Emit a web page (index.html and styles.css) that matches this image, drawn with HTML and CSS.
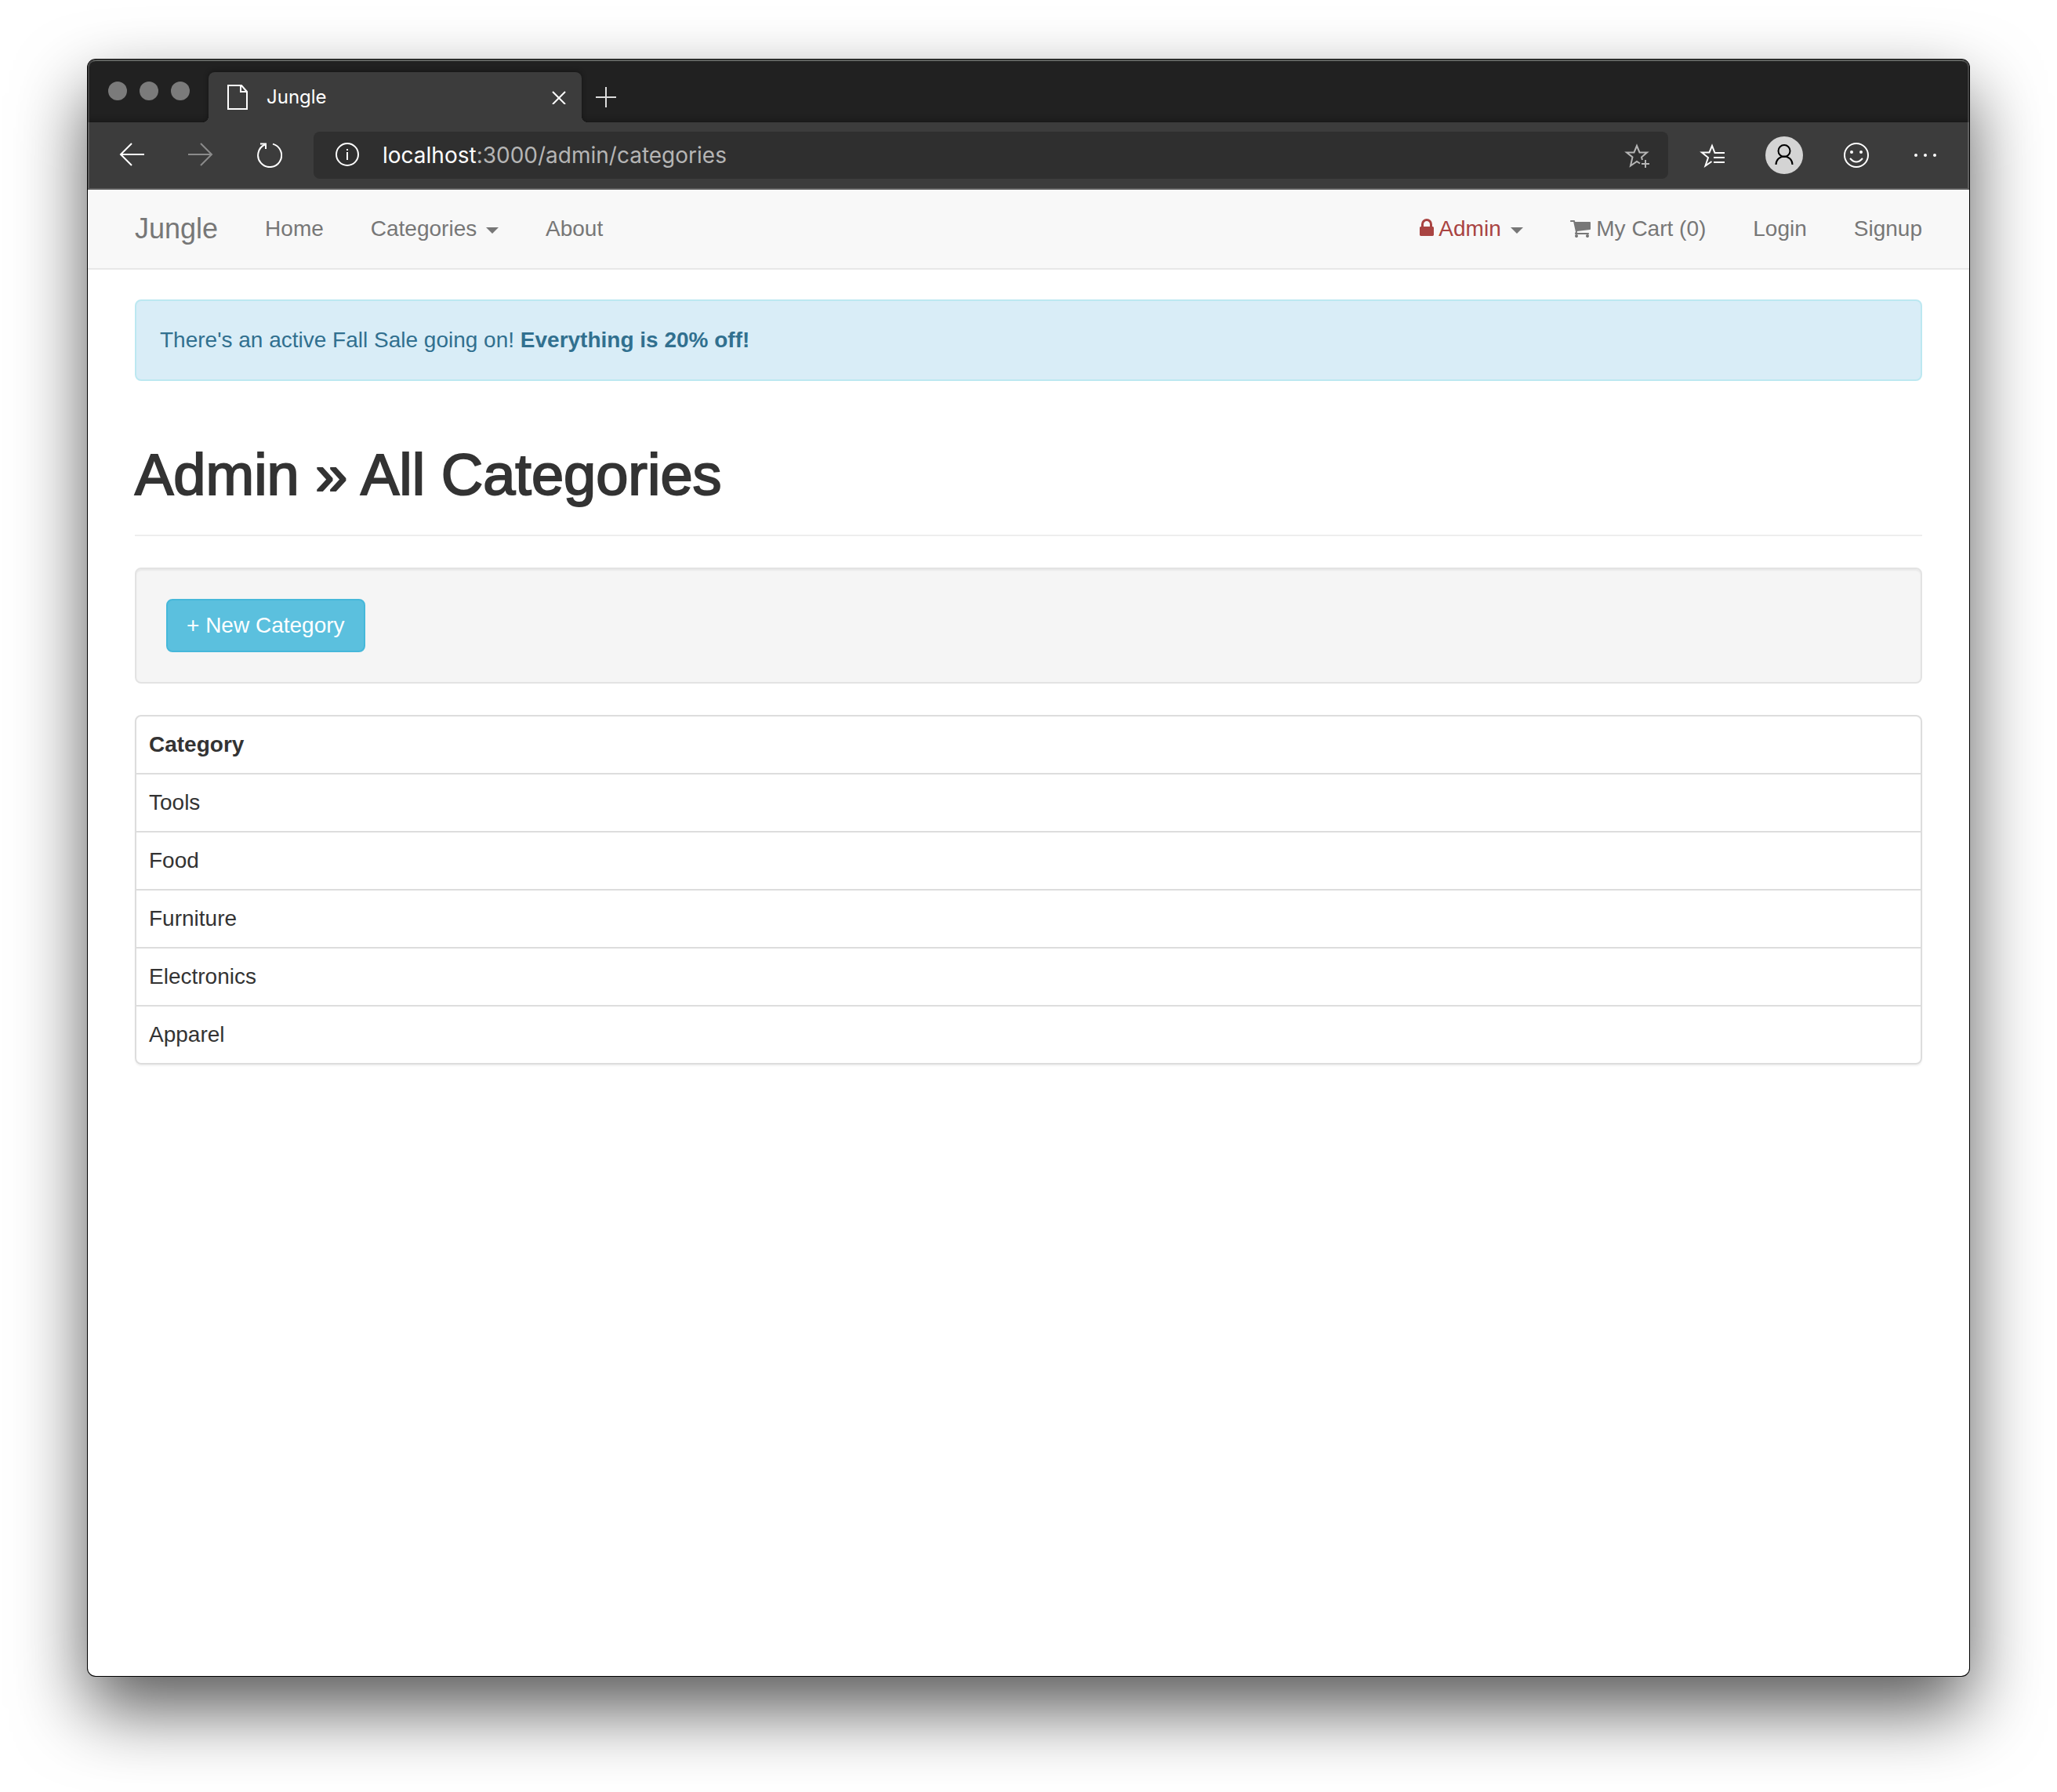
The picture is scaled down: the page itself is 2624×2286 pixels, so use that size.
FILE: index.html
```html
<!DOCTYPE html>
<html lang="en">
<head>
<meta charset="utf-8">
<title>Jungle</title>
<link rel="stylesheet" href="styles.css">
</head>
<body>
<div class="window">
  <header class="chrome">
    <div class="tab-strip">
      <div class="lights"><span class="light"></span><span class="light"></span><span class="light"></span></div>
      <div class="tab">
        <svg class="tab-icon" width="26" height="32" viewBox="0 0 26 32" fill="none" stroke="#fff" stroke-width="2"><path d="M1 1H18L25 9V31H1Z"/><path d="M17 1V9H25"/></svg>
        <span class="tab-title">Jungle</span>
        <button class="icon-button" type="button" aria-label="Close tab">
          <svg width="18" height="18" viewBox="0 0 18 18" fill="none" stroke="#fff" stroke-width="2"><path d="M1 2L17 18M17 2L1 18"/></svg>
        </button>
      </div>
      <button class="icon-button new-tab" type="button" aria-label="New tab">
        <svg width="26" height="26" viewBox="0 0 26 26" fill="none" stroke="#dcdcdc" stroke-width="2"><path d="M13 0V26M0 13H26"/></svg>
      </button>
    </div>
    <div class="toolbar">
      <div class="history">
        <button class="icon-button" type="button" aria-label="Back">
          <svg width="32" height="32" viewBox="0 0 32 32" fill="none" stroke="#fff" stroke-width="2"><path d="M32 15H2M16 1L2 15L16 29"/></svg>
        </button>
        <button class="icon-button" type="button" aria-label="Forward" disabled>
          <svg width="32" height="32" viewBox="0 0 32 32" fill="none" stroke="#8b8b8b" stroke-width="2"><path d="M0 15H30M16 1L30 15L16 29"/></svg>
        </button>
        <button class="icon-button" type="button" aria-label="Reload">
          <svg width="32" height="32" viewBox="0 0 32 32" fill="none" stroke="#fff" stroke-width="2"><path d="M20 1.6A15 15 0 1 1 10.5 2.2"/><path d="M4 1.6H11V8"/></svg>
        </button>
      </div>
      <div class="address">
        <svg width="32" height="32" viewBox="0 0 32 32" fill="none" stroke="#fff" stroke-width="2"><circle cx="15" cy="15" r="14"/><path d="M15 12V22M15 8V10"/></svg>
        <div class="url" role="textbox" aria-label="Address" contenteditable="true" spellcheck="false"><span class="host">localhost</span>:3000/admin/categories</div>
        <button class="icon-button" type="button" aria-label="Add to favorites">
          <svg width="32" height="32" viewBox="0 0 32 32" fill="none" stroke="#b5b5b5" stroke-width="2"><path d="M20 26.500L16 24L8 29.500L10.500 18.500L3 12.500H12.500L16 4L19.500 12.500H29L22 18.500L23 22"/><path d="M27 22V32M22 27H32"/></svg>
        </button>
      </div>
      <div class="actions">
        <button class="icon-button" type="button" aria-label="Favorites">
          <svg width="32" height="32" viewBox="0 0 32 32" fill="none" stroke="#fff" stroke-width="2"><path d="M32 13H19.500L16 4L12.500 12.500H3L11 19L7.500 29.500L15.500 24"/><path d="M18 19H32M18 25H32"/></svg>
        </button>
        <button class="icon-button" type="button" aria-label="Profile">
          <svg width="48" height="48" viewBox="0 0 48 48" fill="none" stroke="#000" stroke-width="2"><circle cx="24" cy="24" r="24" fill="#d4d4d4" stroke="none"/><circle cx="24" cy="18.500" r="7.500"/><path d="M13.500 36A10.500 10.500 0 0 1 34.500 36"/></svg>
        </button>
        <button class="icon-button" type="button" aria-label="Feedback">
          <svg width="32" height="32" viewBox="0 0 32 32" fill="none" stroke="#fff" stroke-width="2"><circle cx="16" cy="16" r="15"/><path d="M8 20Q16 29 24 20"/><g fill="#fff" stroke="none"><circle cx="10" cy="12" r="2"/><circle cx="22" cy="12" r="2"/></g></svg>
        </button>
        <button class="icon-button" type="button" aria-label="More">
          <svg width="40" height="32" viewBox="0 0 40 32" fill="#fff"><circle cx="8" cy="16" r="2"/><circle cx="20" cy="16" r="2"/><circle cx="32" cy="16" r="2"/></svg>
        </button>
      </div>
    </div>
  </header>

  <nav class="navbar">
    <div class="nav-group">
      <a class="brand" href="#">Jungle</a>
      <a class="nav-link" href="#">Home</a>
      <a class="nav-link" href="#">Categories <span class="caret"></span></a>
      <a class="nav-link" href="#">About</a>
    </div>
    <div class="nav-group">
      <a class="nav-link" href="#"><span class="admin"><svg width="18" height="22" viewBox="320 128 1152 1408" fill="currentColor"><path d="M640 768h512v-192q0-106-75-181t-181-75-181 75-75 181v192zm832 96v576q0 40-28 68t-68 28h-960q-40 0-68-28t-28-68v-576q0-40 28-68t68-28h32v-192q0-184 132-316t316-132 316 132 132 316v192h32q40 0 68 28t28 68z"/></svg> Admin</span> <span class="caret"></span></a>
      <a class="nav-link" href="#"><svg class="cart" width="26" height="22" viewBox="64 256 1664 1408" fill="currentColor"><path d="M704 1536q0 52-38 90t-90 38-90-38-38-90 38-90 90-38 90 38 38 90zm896 0q0 52-38 90t-90 38-90-38-38-90 38-90 90-38 90 38 38 90zm128-1088v512q0 24-16.500 42.500t-40.500 21.500l-1044 122q13 60 13 70 0 16-24 64h920q26 0 45 19t19 45-19 45-45 19h-1024q-26 0-45-19t-19-45q0-11 8-31.500t16-36 21.500-40 15.500-29.500l-177-823h-204q-26 0-45-19t-19-45 19-45 45-19h256q16 0 28.500 6.500t19.500 15.500 13 24.500 8 26 5.500 29.500 4.500 26h1201q26 0 45 19t19 45z"/></svg> My Cart (0)</a>
      <a class="nav-link" href="#">Login</a>
      <a class="nav-link" href="#">Signup</a>
    </div>
  </nav>

  <main class="content">
    <div class="alert" role="status">There's an active Fall Sale going on! <strong>Everything is 20% off!</strong></div>
    <div class="page-header"><h1>Admin » All Categories</h1></div>
    <div class="well"><a class="button" href="#">+ New Category</a></div>
    <div class="panel">
      <table class="table">
        <thead><tr><th scope="col">Category</th></tr></thead>
        <tbody>
          <tr><td>Tools</td></tr>
          <tr><td>Food</td></tr>
          <tr><td>Furniture</td></tr>
          <tr><td>Electronics</td></tr>
          <tr><td>Apparel</td></tr>
        </tbody>
      </table>
    </div>
  </main>
</div>
</body>
</html>
```
FILE: styles.css
```css
* { box-sizing: border-box; }

body {
  margin: 0;
  min-height: 100vh;
  padding: 76px 112px 148px;
  display: flex;
  flex-direction: column;
  background: #fff;
  color: #333;
  font: 28px/40px "Liberation Sans", Arial, sans-serif;
}

a { color: inherit; text-decoration: none; }
svg { flex: none; }

.window {
  flex: 1;
  border-radius: 10px;
  background: #fff;
  box-shadow: 0 0 0 1px #000, 0 42px 92px rgba(0, 0, 0, .66);
}

/* Browser chrome */
.chrome {
  border-radius: 10px 10px 0 0;
  background: #3c3c3c;
  box-shadow: inset 0 0 0 2px #5f5f5f;
}

.tab-strip {
  display: flex;
  align-items: flex-end;
  height: 80px;
  padding: 0 26px;
  border-radius: 10px 10px 0 0;
  background: #212121;
  box-shadow: inset 2px 0 #424242, inset -2px 0 #424242, inset 0 2px #5f625f, inset 0 -6px 6px -4px #171717;
}

.lights {
  display: flex;
  gap: 16px;
  align-self: center;
  margin-right: 24px;
}

.light {
  width: 24px;
  height: 24px;
  border-radius: 50%;
  background: #7b7b7b;
}

.tab {
  position: relative;
  flex: 0 1 476px;
  display: flex;
  align-items: center;
  gap: 24px;
  height: 64px;
  padding: 0 20px 0 24px;
  border-radius: 8px 8px 0 0;
  background: #3c3c3c;
  box-shadow: 0 -1px 6px rgba(0, 0, 0, .4);
  clip-path: inset(-8px -8px 0 -8px);
}

.tab::before,
.tab::after {
  content: "";
  position: absolute;
  bottom: 0;
  width: 8px;
  height: 8px;
}

.tab::before { right: 100%; background: radial-gradient(circle at 0 0, transparent 8px, #3c3c3c 8px); }
.tab::after { left: 100%; background: radial-gradient(circle at 100% 0, transparent 8px, #3c3c3c 8px); }

.tab-title {
  flex: 1;
  color: #fff;
  font: 24px/32px Inter, sans-serif;
}

.icon-button {
  display: flex;
  padding: 0;
  border: 0;
  background: none;
}

.new-tab {
  align-items: center;
  height: 64px;
  margin-left: 18px;
}

.toolbar {
  display: flex;
  align-items: center;
  gap: 40px;
  padding: 12px 36px 12px 40px;
  border-bottom: 2px solid #5c5c5c;
}

.history { display: flex; gap: 56px; }

.address {
  flex: 1;
  display: flex;
  align-items: center;
  gap: 28px;
  height: 60px;
  padding: 0 24px 0 28px;
  border-radius: 8px;
  background: #2f2f2f;
}

.url {
  flex: 1;
  color: #b5b5b5;
  font: 28px/40px Inter, sans-serif;
}

.host { color: #fff; }

.actions { display: flex; align-items: center; gap: 52px; }

/* Site navigation */
.navbar {
  display: flex;
  justify-content: space-between;
  padding: 30px 60px;
  border-bottom: 2px solid #e7e7e7;
  background: #f8f8f8;
  color: #777;
}

.nav-group { display: flex; gap: 60px; }
.brand { font-size: 36px; }
.admin { color: #a94442; }
.cart { vertical-align: -2px; }

.caret {
  display: inline-block;
  margin-left: 4px;
  border-top: 8px solid;
  border-right: 8px solid transparent;
  border-left: 8px solid transparent;
  vertical-align: middle;
}

/* Page content */
.content { padding: 38px 60px; }

.alert {
  padding: 30px;
  border: 2px solid #bce8f1;
  border-radius: 8px;
  background: #d9edf7;
  color: #31708f;
}

.page-header {
  margin: 80px 0 40px;
  padding-bottom: 36px;
  border-bottom: 2px solid #eee;
}

h1 {
  margin: 0;
  font-size: 74px;
  font-weight: 400;
  line-height: 80px;
  -webkit-text-stroke: 2px;
}

.well {
  display: flex;
  margin-bottom: 40px;
  padding: 38px;
  border: 2px solid #e3e3e3;
  border-radius: 8px;
  background: #f5f5f5;
  box-shadow: inset 0 2px 2px rgba(0, 0, 0, .05);
}

.button {
  padding: 12px 24px;
  border: 2px solid #46b8da;
  border-radius: 8px;
  background: #5bc0de;
  color: #fff;
}

.panel {
  border: 2px solid #ddd;
  border-radius: 8px;
  box-shadow: 0 2px 2px rgba(0, 0, 0, .05);
}

.table {
  width: 100%;
  border-spacing: 0;
}

.table th,
.table td {
  padding: 16px;
  text-align: left;
}

.table td { border-top: 2px solid #ddd; }
```
